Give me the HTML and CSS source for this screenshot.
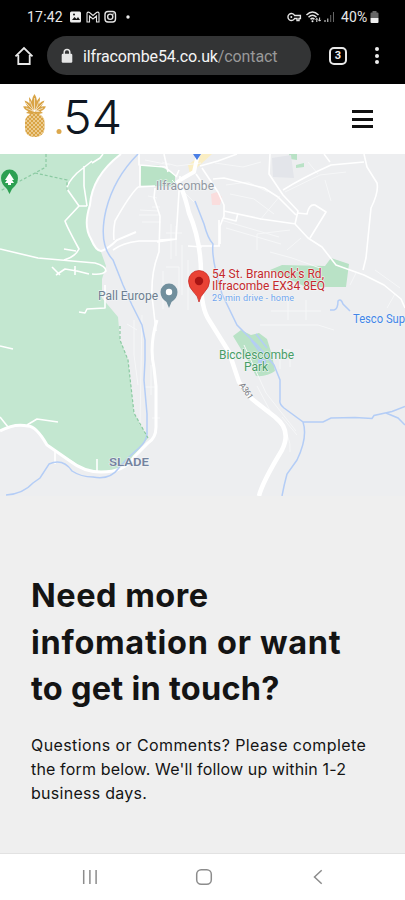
FILE: index.html
```html
<!DOCTYPE html>
<html lang="en">
<head>
<meta charset="utf-8">
<meta name="viewport" content="width=device-width, initial-scale=1">
<title>Contact</title>
<link rel="stylesheet" href="styles.css">
</head>
<body>
<div class="phone">
  <div class="status">
    <span class="clock">17:42</span>
    <svg class="status-apps" width="66" height="16" viewBox="0 0 66 16" fill="none" stroke="#e4e4e4">
      <rect x="1" y="2.5" width="11" height="11" rx="1.5" fill="#eee" stroke="none"/>
      <path d="M3 11l2.5-3 2 2 1.5-2 2 3z" fill="#111" stroke="none"/><circle cx="5" cy="5.5" r="1" fill="#111" stroke="none"/>
      <path d="M18 13V4q1-1.500 2.500-.5L24 6.500l3.500-3Q29 2.500 30 4v9h-2.500V7L24 10l-3.500-3v6z" stroke-width="1.1"/>
      <rect x="36" y="2.500" width="10.500" height="10.500" rx="3" stroke-width="1.400"/><circle cx="41.250" cy="7.750" r="2.600" stroke-width="1.400"/><circle cx="44.200" cy="4.900" r=".7" fill="#eee" stroke="none"/>
      <circle cx="59" cy="8" r="1.700" fill="#eee" stroke="none"/>
    </svg>
    <svg class="status-signal" width="50" height="16" viewBox="0 0 50 16" fill="none" stroke="#e4e4e4">
      <path d="M8.600 6.500a3.500 3.500 0 1 0 0 3H11v2h2v-2h1.400v-3z" stroke-width="1.400"/><circle cx="5.300" cy="8" r="1" fill="#eee" stroke="none"/>
      <path d="M20.500 6Q26.500 0 32.500 6M22.500 8.200q4-3.800 8 0M24.500 10.300q2-1.800 4 0" stroke-width="1.500"/><circle cx="26.500" cy="12.300" r="1" fill="#eee" stroke="none"/>
      <path d="M30.800 13V9.500M29.600 10.700l1.200-1.300 1.200 1.300M33.600 8.500V12M32.400 10.900l1.200 1.300 1.200-1.300"/>
      <path d="M39 13v-2M41.800 13V9.500"/><path d="M44.700 13V6M47.500 13V3" stroke="#666"/>
    </svg>
    <span class="percent">40%</span>
    <svg width="9" height="14" viewBox="0 0 9 14"><path d="M2.500 1h4v1.500h1q1 0 1 1V8h-8V3.500q0-1 1-1h1z" fill="#666"/><path d="M.5 8h8v4q0 1-1 1h-6q-1 0-1-1z" fill="#eee"/></svg>
  </div>
  <div class="browser">
    <svg class="home" width="20" height="20" viewBox="0 0 20 20" fill="none" stroke="#e8e8e8" stroke-width="1.800"><path d="M1.500 10.300L10 2l8.500 8.300M4.300 9v9h11.400V9"/></svg>
    <div class="url">
      <svg width="12" height="16" viewBox="0 0 12 16"><path d="M3.200 7V4.200a2.800 2.800 0 0 1 5.600 0V7" fill="none" stroke="#e6e6e6" stroke-width="1.500"/><rect x=".7" y="5.700" width="10.600" height="9" rx="1.200" fill="#e6e6e6"/></svg>
      <span class="address">ilfracombe54.co.uk<i>/contact</i></span>
    </div>
    <span class="tabs">3</span>
    <span class="dots"><b></b><b></b><b></b></span>
  </div>
  <header class="site-header">
    <svg class="logo" width="110" height="60" viewBox="0 -5 110 60">
      <defs><pattern id="skin" width="4" height="4" patternUnits="userSpaceOnUse"><path d="M0 0l4 4M4 0L0 4" stroke="#f8e6bf" stroke-width=".6"/></pattern></defs>
      <g fill="#d9a446">
        <path d="M12.500 1Q17 7 13.500 17h-3Q8 7 12.500 1z"/>
        <path d="M7 4Q11 8 12 17 7 14 7 4zM18 4q-5 5-5 13 5-4 5-13zM2.500 7.500Q9 9 11.500 18 5 15 2.500 7.500zM22.500 7.500Q16 9 13.500 18q6-3 9-10.500zM1 13.500q7-1 10 5-7 1-10-5zM24 13.500q-7-1-10 5 7 1 10-5zM4 20q4-4 8.500-1Q17 16 21 20l-8 2z"/>
        <rect x="3" y="20.500" width="19.500" height="23.500" rx="8.500"/>
      </g>
      <path d="M12.500 5v12M7.800 8l3.700 9M17.300 8l-3.800 9M4 10l7 7M21 10l-7 7M4 15l7 3M21 15l-7 3" stroke="#fff" stroke-width=".6"/>
      <rect x="3" y="20.500" width="19.500" height="23.500" rx="8.500" fill="url(#skin)"/>
      <circle cx="37" cy="38.500" r="2.500" fill="#dca84d"/>
      <text x="41" y="41" class="logo-text" textLength="59" lengthAdjust="spacingAndGlyphs">54</text>
    </svg>
    <div class="burger"><b></b><b></b><b></b></div>
  </header>
  <svg class="map" viewBox="0 154 405 342" width="405" height="342" fill="none">
    <rect y="154" width="405" height="342" fill="#edeef0"/>
    <path d="M0 154H121Q93 176 89 205Q85 225 90 238Q94 248 101 252L106 266 102 279V298L118 317 120 340 128 360 134 413 148 438 133 457Q122 473 97 472Q84 471 74 462L55 450 45 443Q37 427 28 426 14 423 0 431z" fill="#c3e7d0"/>
    <g fill="#b9e2c6">
      <path d="M141 165l18 .5 16 9v12l-35-1z"/>
      <path d="M289 154h8v6l-7-1zM296 165l8-2v4l-8 1z"/>
      <path d="M270 270l12-5 43 1 6-8 18 6-3 23h-40z"/>
      <path d="M233 336l8-6 10 5 8-2 8 6 5 16 3 16q-8 6-19 5l-6-12z"/>
    </g>
    <path d="M272 158l19-3 3 23-21-1z" fill="#e3e5ea"/>
    <path d="M188 165l14-11h10l-22 20z" fill="#faeec4"/>
    <path d="M211 194l6-2 5 5-2 8h-8z" fill="#fadddd"/>
    <g class="minor">
      <path d="M139 215h21M142 222h19M140 210l18 1M171 224v35M176 226v30M166 233h16M148 196l9 2M152 207h8M166 267h13v23M163 271v38M182 245v50M188 260v50M142 315l-2 110M134 320v35l4 30M151 365v30M127 324l10 6M145 387h11M152 418h8"/>
      <path d="M226 185l22-3 20 10M230 194l24 5 20 15M221 220l58 17M226 228l55 16M257 250v-16l33-4M270 252l22 6 28 10M260 220l20-24M308 162l10 12M285 192l35-17 26-3M215 163l28 4 18-5M301 238l-14 12M271 311h50M288 296v24M306 300v20M260 325h58l16 5M350 285l6-12M162 162l15 4 24-3M172 180l22 22M145 160l25 5"/>
      <path d="M251 366l12-3M280 369v-19h10v17M244 345l22 48 30 38M257 386l18 34q17 14 15 32M282 417l15 18"/>
      <path d="M387 308l8-14M375 270l25 18M325 180l6 21"/>
    </g>
    <g class="street">
      <path d="M92 163l8-5 3-4M92 161L77 173q-10 10-10 16l12 17-14 15q2 6 14 28-4 8-15 11M64 249l12 2M84 166v20l3 20M79 206h8M0 249l38 9 57 5q11 3 11 8-3 4-14 3M52 267l8 8M56 275l9-6 12 2 12 3M75 266v9M105 285v23l-18 1-2 4-6-1M0 346l13 3M27 425l10-6 21 3M0 417l8 10M97 459v13M55 450v14"/>
      <path d="M139 154v11l26 2 12 10M140 165v21M138 187q-9 9-23 34-2 10-1 19M138 187l17-1M155 188l-1 10 6 18-1 36q-8 20-7 44l4 35M159 241h-20Q122 243 113 250M159 240l17-1 4-63M157 242l20-3M164 154l4 18M179 170l-3 7M196 174l9 13"/>
      <path d="M200 166l18-5 19-7M202 168l16 24 6 13v11l-4 10v18M224 211l37 8 35 5M224 218l12 3 2-8M220 246h-20M213 179l11-1 40 10 14 9 18 18M270 154l-1 20 14 21 15 16-3 13 13 14 14 9 14 18 28 10 20 10 17 14 4 9M297 213l10 1q2-10 8-9l11 7-16 26M283 190q19-12 48-25l33-3M324 154l6 8"/>
      <path d="M364 154l3 13 10 16q2 9-6 25l-5 50-3 12"/>
      <path d="M188 246l14 1M219 220v26"/>
    </g>
    <path class="road" d="M121 154Q92 176 90 205 83 226 91 239 96 251 101 251 108 249 117 240L136 232"/>
    <path class="road wide" d="M157 320q-8 26-3 48l2 18v41q0 11-8 16l-14 14q-9 15-33 15-17 0-31-11L47 445Q36 426 28 426 14 423 0 431"/>
    <path d="M198 154l-4 18-14 8" stroke="#fff" stroke-width="4"/>
    <path d="M177 180q6 8 12 33 13 30 12 67 0 28 8 40l20 32 10 30 13 17 23 18q17 13 7 33-20 33-23 46" stroke="#fff" stroke-width="4.500"/>
    <g stroke="#b4cdf6" stroke-width="1.500">
      <path d="M138 154Q114 178 106 210q-8 34 7 50l10 25 9 20 10 20 3 15 0 20-1 20 3 34 0 20q-1 8-8 14-14 12-21 21-8 11-25 8-12 0-21-6-9-13-23-7L40 478l-7 5q-10 11-27 12"/>
      <path d="M195 201l9 23q4 15 9 20-2 14 9 50l15 31 20 20 17 20 6 15v20q-1 4 4 8l19 14q5 15-6 38l-10 14q-3 11-5 22M303 422h20l8-4 24-.5 17 1 2-3 18-4 13-5M386 413l12 5 7 7M251 340l9 12M256 334l11 14M330 310h4q4-1 4-9 3-3 5 3l7 7"/>
      <path d="M258 361l8 1" stroke-width="5"/>
    </g>
    <path class="trail" d="M46 154v13l-11 6-15 8-20 10M35 173l32 7v11M120 326v14l8 20 6 53 14 25"/>
    <path d="M193 154h8l-4 6z" fill="#4b7fe5"/>
    <g>
      <path d="M1 178a8.500 8.500 0 1 1 17 0q0 6-6 11l-2.500 5L7 189q-6-5-6-11z" fill="#2da052"/>
      <path d="M9.500 173l4.500 7h-2l2 3h-3v2H8v-2H5l2-3H5z" fill="#fff"/>
      <path d="M160.500 292a8.500 8.500 0 1 1 17 0q0 6-6 10l-2.500 6-2.500-6q-6-4-6-10z" fill="#718f9d"/><circle cx="169" cy="292" r="3.200" fill="#fff"/>
      <path d="M188.500 281a10.500 10.500 0 1 1 21 0q0 6-5 11-4 4-5.500 10-1-6-5.500-10-5-5-5-11z" fill="#e94235" stroke="#c5221f" stroke-width=".7"/><circle cx="199" cy="281" r="4.200" fill="#a81414"/>
    </g>
    <g class="labels">
      <text x="156" y="190" textLength="58" fill="#9096a0">Ilfracombe</text>
      <text x="98" y="299.500" textLength="60" fill="#6d7e90">Pall Europe</text>
      <text x="212" y="277.500" textLength="112" fill="#c5292c">54 St. Brannock's Rd,</text>
      <text x="212" y="290.300" textLength="113" fill="#c5292c">Ilfracombe EX34 8EQ</text>
      <text x="212" y="300.700" textLength="82" class="tiny" fill="#70a5ed">29 min drive - home</text>
      <text x="353" y="323" textLength="52" lengthAdjust="spacingAndGlyphs" fill="#4285e8">Tesco Sup</text>
      <text x="219" y="358.700" textLength="75" fill="#479d66">Bicclescombe</text>
      <text x="244" y="371.300" textLength="24" fill="#479d66">Park</text>
      <text x="109" y="466" textLength="40" lengthAdjust="spacingAndGlyphs" class="slade" fill="#74839f">SLADE</text>
      <text x="239" y="385" transform="rotate(57 239 385)" class="route" textLength="18" fill="#74777c">A361</text>
    </g>
  </svg>
  <main class="contact">
    <h1><span class="h-one">Need more</span><span class="h-two">infomation or want</span><span class="h-three">to get in touch?</span></h1>
    <p><span class="p-one">Questions or Comments? Please complete</span><span class="p-two">the form below. We'll follow up within 1-2</span><span class="p-three">business days.</span></p>
  </main>
  <nav class="system-nav">
    <svg width="16" height="16" viewBox="0 0 16 16" fill="none" stroke="#8c8c8c" stroke-width="1.500"><path d="M1.700 1v14M7.900 1v14M14.100 1v14"/></svg>
    <svg width="18" height="18" viewBox="0 0 18 18" fill="none" stroke="#8c8c8c" stroke-width="1.500"><rect x="1.700" y="1.700" width="14.600" height="14.600" rx="4.500"/></svg>
    <svg width="10" height="16" viewBox="0 0 10 16" fill="none" stroke="#8c8c8c" stroke-width="1.500"><path d="M8.700 1.200L1.500 8l7.200 6.800"/></svg>
  </nav>
</div>
</body>
</html>
```
FILE: styles.css
```css
* { box-sizing: border-box; }
body { margin: 0; background: #efefef; }
svg { display: block; flex: none; }
.phone { width: 405px; height: 900px; display: flex; flex-direction: column; overflow: hidden; font-family: Roboto, sans-serif; }
.status { height: 34px; background: #000; display: flex; align-items: center; padding: 0 26px 0 27px; color: #e8e8e8; font-size: 14px; }
.clock { width: 42px; letter-spacing: .2px; }
.status-signal { margin-left: auto; margin-right: 5px; }
.percent { width: 29px; letter-spacing: .1px; }
.browser { height: 50px; background: #000; display: flex; align-items: center; padding: 0 24px 8px 14px; }
.home { margin-top: 2px; }
.url { width: 264px; height: 39px; margin: 1px 0 0 13px; border-radius: 20px; background: #333435; display: flex; align-items: center; padding-left: 14px; gap: 10px; }
.address { color: #f5f5f5; font-size: 16px; white-space: nowrap; letter-spacing: -.12px; margin-top: 1px; }
.address i { font-style: normal; color: #999; }
.tabs { width: 18px; height: 18px; margin: 1px 28px 0 18px; border: 2px solid #e8e8e8; border-radius: 5px; color: #eee; font-size: 11px; font-weight: 700; line-height: 14px; text-align: center; }
.dots { display: flex; flex-direction: column; gap: 2.5px; margin-top: 1px; }
.dots b { width: 4px; height: 4px; border-radius: 50%; background: #eee; }
.site-header { height: 70px; background: #fff; display: flex; justify-content: space-between; align-items: center; padding: 0 32px 0 22px; }
.logo { margin-top: -3px; }
.logo-text { font-family: Inter, sans-serif; font-weight: 300; font-size: 47px; fill: #0f1722; }
.burger { width: 21px; display: flex; flex-direction: column; gap: 4.5px; }
.burger b { height: 3px; background: #111; }
.map { font-family: Roboto, sans-serif; }
.minor { stroke: #f6f7f8; stroke-width: 1; }
.street { stroke: #fff; stroke-width: 1.6; stroke-linejoin: round; }
.road { stroke: #fff; stroke-width: 2; }
.wide { stroke-width: 3; }
.trail { stroke: #8bcaa2; stroke-width: 1.2; stroke-dasharray: 3 2; }
.labels { font-size: 12px; paint-order: stroke; stroke: #f4f6f7; stroke-width: 1px; }
.tiny { font-size: 9px; }
.slade { font-size: 11.5px; font-weight: 600; }
.route { font-size: 8.5px; }
.contact { flex: 1; background: #efefef; padding: 77px 0 0 31px; color: #141414; font-family: Inter, sans-serif; }
.contact span { display: block; white-space: nowrap; }
h1 { margin: 0; font-size: 32.5px; line-height: 46.7px; font-weight: 700; }
p { margin: 21px 0 0; font-size: 16px; line-height: 23.7px; }
.h-one { letter-spacing: .5px; }
.h-two { letter-spacing: .7px; }
.h-three { letter-spacing: .25px; }
.p-one { letter-spacing: .4px; }
.p-two { letter-spacing: .15px; }
.p-three { letter-spacing: .27px; }
.system-nav { height: 47px; background: #fff; border-top: 1px solid #e2e2e2; display: grid; grid-template-columns: 113px 118px 10px; align-items: center; padding-left: 82px; }
```
